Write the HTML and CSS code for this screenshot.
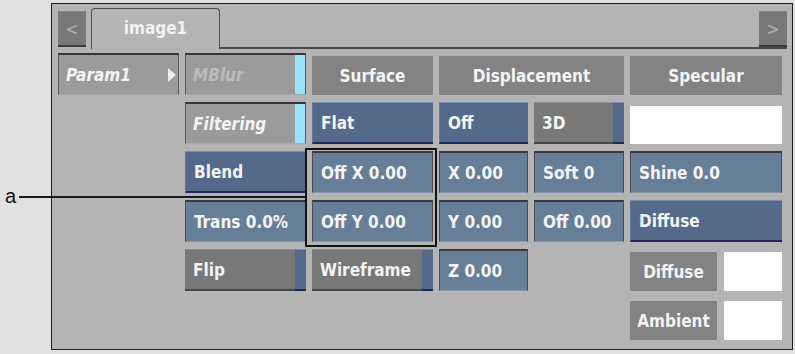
FILE: index.html
```html
<!DOCTYPE html>
<html>
<head>
<meta charset="utf-8">
<link rel="stylesheet" href="styles.css">
</head>
<body>
<div class="stage">
  <div class="callout"><span class="callout-label">a</span><span class="callout-line"></span></div>
  <div class="panel">
    <div class="tabbar">
      <div class="arrow arrow-left">&lt;</div>
      <div class="tab">image1</div>
      <div class="tab-rest"><div class="arrow arrow-right">&gt;</div></div>
    </div>
    <div class="grid">
      <div class="cell param r1 c1"><span class="txt">Param1</span><span class="tri"></span></div>
      <div class="cell param r1 c2 with-strip"><span class="txt dim">MBlur</span><span class="cyan"></span></div>
      <div class="cell hdr r1 c3">Surface</div>
      <div class="cell hdr r1 c45">Displacement</div>
      <div class="cell hdr r1 c6">Specular</div>

      <div class="cell param r2 c2 with-strip"><span class="txt">Filtering</span><span class="cyan"></span></div>
      <div class="cell blue r2 c3">Flat</div>
      <div class="cell blue r2 c4">Off</div>
      <div class="cell split r2 c5"><span class="gpart">3D</span><span class="bpart"></span></div>
      <div class="cell white r2 c6"></div>

      <div class="cell blue r3 c2">Blend</div>
      <div class="cell field r3 c3">Off X 0.00</div>
      <div class="cell field r3 c4">X 0.00</div>
      <div class="cell field r3 c5">Soft 0</div>
      <div class="cell field r3 c6">Shine 0.0</div>

      <div class="cell field r4 c2">Trans 0.0%</div>
      <div class="cell field r4 c3">Off Y 0.00</div>
      <div class="cell field r4 c4">Y 0.00</div>
      <div class="cell field r4 c5">Off 0.00</div>
      <div class="cell blue r4 c6">Diffuse</div>

      <div class="cell split r5 c2"><span class="gpart">Flip</span><span class="bpart"></span></div>
      <div class="cell split r5 c3"><span class="gpart">Wireframe</span><span class="bpart"></span></div>
      <div class="cell field r5 c4">Z 0.00</div>
      <div class="swatch-row r5 c6"><span class="hdr-sm">Diffuse</span><span class="swatch"></span></div>
      <div class="swatch-row r6 c6"><span class="hdr-sm">Ambient</span><span class="swatch"></span></div>

      <div class="frame"></div>
    </div>
  </div>
</div>
</body>
</html>
```

FILE: styles.css
```css
html, body {
  margin: 0;
  background: #e1e1e1;
}
body {
  font-family: "DejaVu Sans Condensed", "DejaVu Sans", sans-serif;
  font-stretch: condensed;
}
.stage {
  position: relative;
  width: 795px;
  height: 354px;
  box-sizing: border-box;
  padding: 3px 0 0 51px;
}
.callout {
  position: absolute;
  left: 0;
  top: 0;
  z-index: 5;
}
.callout-label {
  position: absolute;
  left: 5px;
  top: 186px;
  font-family: "Liberation Sans", Arial, sans-serif;
  font-size: 20px;
  line-height: 20px;
  color: #111;
}
.callout-line {
  position: absolute;
  left: 19px;
  top: 196px;
  width: 287px;
  height: 2px;
  background: #1a1a1a;
}
.panel {
  width: 742px;
  height: 347px;
  box-sizing: border-box;
  border: 1px solid #1e1e1e;
  background: #b4b4b4;
}
.tabbar {
  display: flex;
  align-items: flex-end;
  height: 45px;
  padding: 0 5px 0 6px;
}
.arrow {
  width: 28px;
  background: #787878;
  border-bottom: 2px solid #3a3a3a;
  color: #b0b0b0;
  font-family: "DejaVu Sans", sans-serif;
  font-size: 17px;
  display: flex;
  align-items: center;
  justify-content: center;
}
.arrow-left {
  height: 33px;
  margin-bottom: 2px;
  border-top: 1px solid #8a8a8a;
  box-sizing: content-box;
}
.arrow-right {
  height: 33px;
  border-top: 1px solid #8a8a8a;
}
.tab {
  width: 127px;
  height: 40px;
  margin-left: 5px;
  border: 1px solid #4d4d4d;
  border-bottom: none;
  border-radius: 4px 4px 0 0;
  color: #f3f3f3;
  font-weight: bold;
  font-size: 17px;
  display: flex;
  justify-content: center;
  align-items: center;
  padding-bottom: 2px;
  box-sizing: content-box;
  height: 38px;
}
.tab-rest {
  flex: 1;
  display: flex;
  justify-content: flex-end;
  align-items: flex-end;
  border-bottom: 2px solid #4a4a4a;
}
.grid {
  display: grid;
  grid-template-columns: 121px 121px 121px 89px 90px 152px;
  grid-template-rows: repeat(6, 42px);
  column-gap: 6px;
  row-gap: 7px;
  margin: 4px 0 0 6px;
}
.r1 { grid-row: 1; }
.r2 { grid-row: 2; }
.r3 { grid-row: 3; }
.r4 { grid-row: 4; }
.r5 { grid-row: 5; }
.r6 { grid-row: 6; }
.c1 { grid-column: 1; }
.c2 { grid-column: 2; }
.c3 { grid-column: 3; }
.c4 { grid-column: 4; }
.c5 { grid-column: 5; }
.c45 { grid-column: 4 / 6; }
.c6 { grid-column: 6; }

.cell {
  box-sizing: border-box;
  display: flex;
  align-items: center;
  padding-left: 8px;
  color: #f4f4f4;
  font-weight: bold;
  font-size: 17px;
  white-space: nowrap;
  overflow: hidden;
}
.param {
  background: #9b9b9b;
  border-top: 2px solid #363636;
  border-left: 1px solid #5a5a5a;
  border-right: 1px solid #5a5a5a;
  border-bottom: 1px solid #a9a9a9;
  font-style: italic;
  padding-left: 7px;
}
.with-strip {
  padding-right: 0;
  align-items: stretch;
}
.with-strip .txt {
  flex: 1;
  display: flex;
  align-items: center;
}
.txt.dim {
  color: #bcbcbc;
}
.cyan {
  width: 10px;
  background: #9ae2fa;
}
.tri {
  margin-left: auto;
  margin-right: 2px;
  width: 0;
  height: 0;
  border-left: 8px solid #eeeeee;
  border-top: 7px solid transparent;
  border-bottom: 7px solid transparent;
}
.hdr {
  background: #838383;
  justify-content: center;
  padding-left: 0;
  align-self: end;
  height: 39px;
}
.blue {
  background: #55698a;
  border-top: 1px solid #7d8eaa;
  border-left: 1px solid #64779a;
  border-bottom: 2px solid #24285a;
}
.field {
  background: #677e99;
  border-top: 2px solid #3a3a3a;
  border-left: 1px solid #4c4c4c;
  border-right: 1px solid #4c4c4c;
  border-bottom: 1px solid #8797ab;
}
.split {
  padding-left: 0;
  align-items: stretch;
}
.gpart {
  flex: 1;
  display: flex;
  align-items: center;
  padding-left: 8px;
  background: #787878;
  border-top: 1px solid #8e8e8e;
  border-bottom: 2px solid #464646;
}
.bpart {
  width: 11px;
  background: #55698a;
  border-top: 1px solid #7d8eaa;
  border-bottom: 2px solid #24285a;
}
.white {
  background: #ffffff;
  align-self: end;
  height: 38px;
}
.swatch-row {
  display: flex;
  align-self: end;
  height: 39px;
  gap: 7px;
}
.hdr-sm {
  width: 87px;
  background: #838383;
  color: #f4f4f4;
  font-weight: bold;
  font-size: 17px;
  display: flex;
  align-items: center;
  justify-content: center;
}
.swatch {
  flex: 1;
  background: #ffffff;
}
.frame {
  grid-column: 3;
  grid-row: 3 / 5;
  margin: -3px -4px -5px -7px;
  border: 2px solid #141414;
  z-index: 2;
  pointer-events: none;
}
```
